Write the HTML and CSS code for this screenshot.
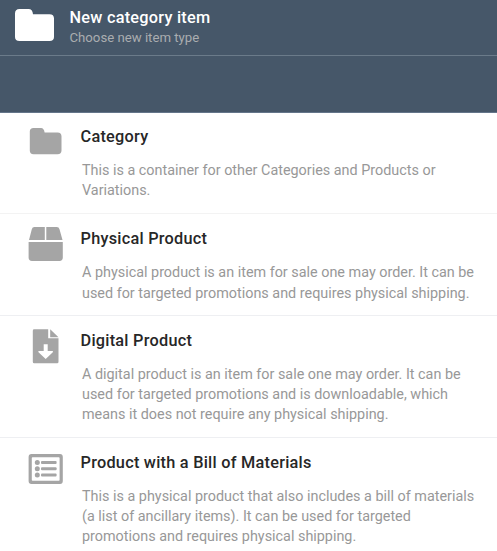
FILE: index.html
```html
<!DOCTYPE html>
<html lang="en">
<head>
<meta charset="utf-8">
<title>New category item</title>
<link rel="stylesheet" href="styles.css">
</head>
<body>
<header class="header">
  <div class="heading">
    <svg class="heading-icon" viewBox="0 0 39 32"><path d="M4.5 0H13.5Q17.5 0 18 5.2H34.5Q39 5.2 39 9.5V28Q39 32 34.5 32H4.5Q0 32 0 28V4.5Q0 0 4.5 0Z"/></svg>
    <div>
      <h1 class="heading-title">New category item</h1>
      <p class="heading-sub">Choose new item type</p>
    </div>
  </div>
</header>
<main>
  <section class="item item-first">
    <svg class="icon" width="50" height="50" viewBox="20 120 50 50"><path d="M33.5 128H41Q44 128 44.6 132.5H57.5Q61.5 132.5 61.5 136.5V150.5Q61.5 154.2 57.5 154.2H33.5Q29.8 154.2 29.8 150.5V131.5Q29.8 128 33.5 128Z"/></svg>
    <div class="text">
      <h2 class="title">Category</h2>
      <p class="desc">This is a container for other Categories and Products or<br>Variations.</p>
    </div>
  </section>
  <section class="item item-second">
    <svg class="icon" width="50" height="50" viewBox="20 221 50 50"><path d="M34.5 227H44.8V240H29L31.8 229.2Q32.3 227 34.5 227ZM46.3 227H56.8Q58.9 227 59.5 229.2L62.5 240H46.3ZM28.6 242H62.8V257.6Q62.8 261 59.5 261H32Q28.6 261 28.6 257.6Z"/></svg>
    <div class="text">
      <h2 class="title">Physical Product</h2>
      <p class="desc">A physical product is an item for sale one may order. It can be<br>used for targeted promotions and requires physical shipping.</p>
    </div>
  </section>
  <section class="item">
    <svg class="icon" width="50" height="50" viewBox="20 323 50 50"><path fill-rule="evenodd" d="M34.2 329.3H48.2V338.2H58.5V361.7Q58.5 363.2 57.2 363.2H34.2Q32.8 363.2 32.8 361.7V330.7Q32.8 329.3 34.2 329.3ZM43.7 344.3V351H38.8Q37.8 351.2 38.5 352.2L45.7 359L52.8 352.2Q53.5 351.2 52.5 351H47.7V344.3Z"/><path d="M50.2 329.3L58.5 337.2H50.2Z"/></svg>
    <div class="text">
      <h2 class="title">Digital Product</h2>
      <p class="desc">A digital product is an item for sale one may order. It can be<br>used for targeted promotions and is downloadable, which<br>means it does not require any physical shipping.</p>
    </div>
  </section>
  <section class="item">
    <svg class="icon" width="50" height="50" viewBox="20 445 50 50"><path fill-rule="evenodd" d="M31.5 454H60Q62.8 454 62.8 457V481Q62.8 484 60 484H31.5Q28.6 484 28.6 481V457Q28.6 454 31.5 454ZM32.6 457.2Q31.8 457.2 31.8 458V480Q31.8 480.8 32.6 480.8H58.8Q59.6 480.8 59.6 480V458Q59.6 457.2 58.8 457.2Z"/><circle cx="37.3" cy="462.5" r="2.5"/><circle cx="37.3" cy="468.8" r="2.5"/><circle cx="37.3" cy="475.1" r="2.5"/><rect x="41" y="461" width="15.6" height="3" rx="1"/><rect x="41" y="467.3" width="15.6" height="3" rx="1"/><rect x="41" y="473.6" width="15.6" height="3" rx="1"/></svg>
    <div class="text">
      <h2 class="title">Product with a Bill of Materials</h2>
      <p class="desc">This is a physical product that also includes a bill of materials<br>(a list of ancillary items). It can be used for targeted<br>promotions and requires physical shipping.</p>
    </div>
  </section>
</main>
</body>
</html>
```
FILE: styles.css
```css
* { box-sizing: border-box; }
body {
  margin: 0;
  height: 551px;
  overflow: hidden;
  background: #fff;
  font-family: Roboto, sans-serif;
}
h1, h2, p { margin: 0; white-space: nowrap; }
.header { height: 113px; background: #465769; border-bottom: 1px solid #64758a; }
.heading {
  display: flex;
  height: 56px;
  padding: 7px 0 0 15px;
  border-bottom: 1px solid #6b7b8a;
}
.heading-icon { width: 39px; height: 32px; margin: 2px 15.5px 0 0; fill: #fff; }
.heading-title { font-size: 16.3px; font-weight: 500; letter-spacing: 0.25px; line-height: 21px; color: #fff; }
.heading-sub { font-size: 13.2px; line-height: 20px; color: #aaadb0; }
.item {
  display: flex;
  padding: 7px 0 12px 20px;
  border-bottom: 1px solid #eeeff2;
}
.item-first { border-bottom-color: #f3f3f3; }
.item:last-child { border-bottom: 0; }
.icon { flex: none; height: 50px; fill: #a5a5a5; margin-bottom: -10px; }
.text { padding: 7px 0 0 10.5px; }
.item-first .text { padding-top: 6px; }
.title { font-size: 16.3px; font-weight: 500; letter-spacing: 0.25px; line-height: 21px; color: #272727; }
.desc { margin: 14px 0 0 1.5px; font-size: 14.38px; line-height: 20px; color: #989898; }
.item-second { padding-bottom: 11px; }
.item-second .desc { line-height: 20.5px; }
```
